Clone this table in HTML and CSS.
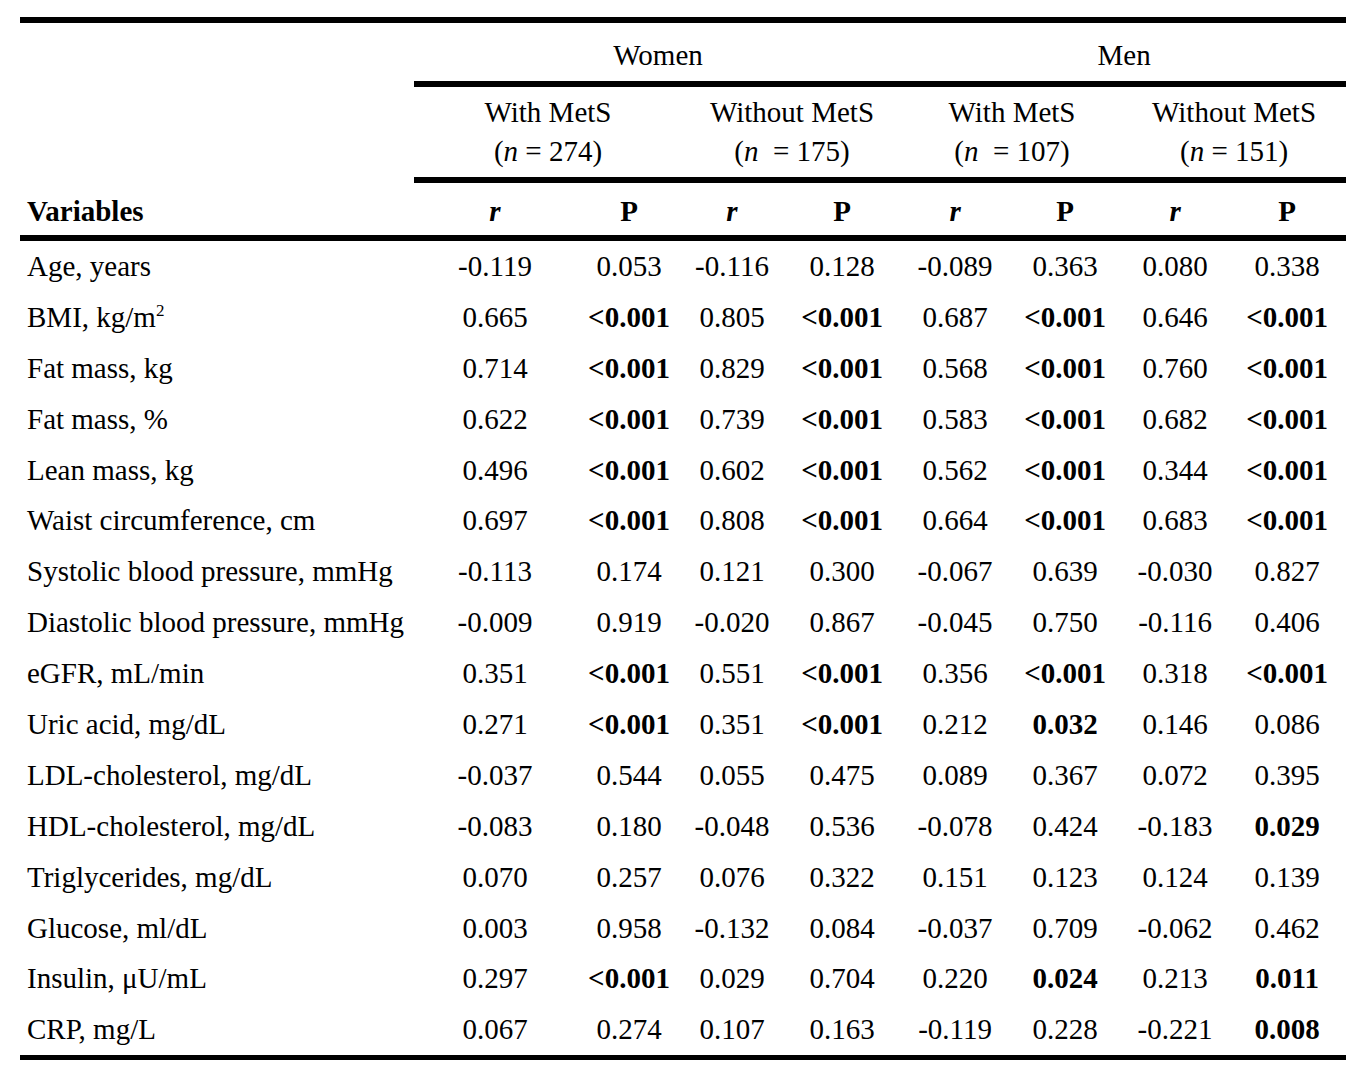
FILE: index.html
```html
<!DOCTYPE html>
<html lang="en">
<head>
<meta charset="utf-8">
<title>Correlations by sex and MetS</title>
<link rel="stylesheet" href="styles.css">
</head>
<body>
<table class="stats">
  <colgroup>
    <col class="c-label">
    <col class="c1"><col class="c2"><col class="c3"><col class="c4">
    <col class="c5"><col class="c6"><col class="c7"><col class="c8">
  </colgroup>
  <thead>
    <tr class="h-sex">
      <th class="blank"></th>
      <th class="grp" colspan="4">Women</th>
      <th class="grp" colspan="4">Men</th>
    </tr>
    <tr class="h-mets">
      <th class="blank"></th>
      <th class="grp" colspan="2">With MetS<br>(<i>n</i> = 274)</th>
      <th class="grp" colspan="2">Without MetS<br>(<i>n</i> &nbsp;= 175)</th>
      <th class="grp" colspan="2">With MetS<br>(<i>n</i> &nbsp;= 107)</th>
      <th class="grp" colspan="2">Without MetS<br>(<i>n</i> = 151)</th>
    </tr>
    <tr class="h-vars">
      <th class="label">Variables</th>
      <th><i>r</i></th><th>P</th>
      <th><i>r</i></th><th>P</th>
      <th><i>r</i></th><th>P</th>
      <th><i>r</i></th><th>P</th>
    </tr>
  </thead>
  <tbody>
    <tr><td class="label">Age, years</td><td>-0.119</td><td>0.053</td><td>-0.116</td><td>0.128</td><td>-0.089</td><td>0.363</td><td>0.080</td><td>0.338</td></tr>
    <tr><td class="label">BMI, kg/m<sup>2</sup></td><td>0.665</td><td class="sig">&lt;0.001</td><td>0.805</td><td class="sig">&lt;0.001</td><td>0.687</td><td class="sig">&lt;0.001</td><td>0.646</td><td class="sig">&lt;0.001</td></tr>
    <tr><td class="label">Fat mass, kg</td><td>0.714</td><td class="sig">&lt;0.001</td><td>0.829</td><td class="sig">&lt;0.001</td><td>0.568</td><td class="sig">&lt;0.001</td><td>0.760</td><td class="sig">&lt;0.001</td></tr>
    <tr><td class="label">Fat mass, %</td><td>0.622</td><td class="sig">&lt;0.001</td><td>0.739</td><td class="sig">&lt;0.001</td><td>0.583</td><td class="sig">&lt;0.001</td><td>0.682</td><td class="sig">&lt;0.001</td></tr>
    <tr><td class="label">Lean mass, kg</td><td>0.496</td><td class="sig">&lt;0.001</td><td>0.602</td><td class="sig">&lt;0.001</td><td>0.562</td><td class="sig">&lt;0.001</td><td>0.344</td><td class="sig">&lt;0.001</td></tr>
    <tr><td class="label">Waist circumference, cm</td><td>0.697</td><td class="sig">&lt;0.001</td><td>0.808</td><td class="sig">&lt;0.001</td><td>0.664</td><td class="sig">&lt;0.001</td><td>0.683</td><td class="sig">&lt;0.001</td></tr>
    <tr><td class="label">Systolic blood pressure, mmHg</td><td>-0.113</td><td>0.174</td><td>0.121</td><td>0.300</td><td>-0.067</td><td>0.639</td><td>-0.030</td><td>0.827</td></tr>
    <tr><td class="label">Diastolic blood pressure, mmHg</td><td>-0.009</td><td>0.919</td><td>-0.020</td><td>0.867</td><td>-0.045</td><td>0.750</td><td>-0.116</td><td>0.406</td></tr>
    <tr><td class="label">eGFR, mL/min</td><td>0.351</td><td class="sig">&lt;0.001</td><td>0.551</td><td class="sig">&lt;0.001</td><td>0.356</td><td class="sig">&lt;0.001</td><td>0.318</td><td class="sig">&lt;0.001</td></tr>
    <tr><td class="label">Uric acid, mg/dL</td><td>0.271</td><td class="sig">&lt;0.001</td><td>0.351</td><td class="sig">&lt;0.001</td><td>0.212</td><td class="sig">0.032</td><td>0.146</td><td>0.086</td></tr>
    <tr><td class="label">LDL-cholesterol, mg/dL</td><td>-0.037</td><td>0.544</td><td>0.055</td><td>0.475</td><td>0.089</td><td>0.367</td><td>0.072</td><td>0.395</td></tr>
    <tr><td class="label">HDL-cholesterol, mg/dL</td><td>-0.083</td><td>0.180</td><td>-0.048</td><td>0.536</td><td>-0.078</td><td>0.424</td><td>-0.183</td><td class="sig">0.029</td></tr>
    <tr><td class="label">Triglycerides, mg/dL</td><td>0.070</td><td>0.257</td><td>0.076</td><td>0.322</td><td>0.151</td><td>0.123</td><td>0.124</td><td>0.139</td></tr>
    <tr><td class="label">Glucose, ml/dL</td><td>0.003</td><td>0.958</td><td>-0.132</td><td>0.084</td><td>-0.037</td><td>0.709</td><td>-0.062</td><td>0.462</td></tr>
    <tr><td class="label">Insulin, μU/mL</td><td>0.297</td><td class="sig">&lt;0.001</td><td>0.029</td><td>0.704</td><td>0.220</td><td class="sig">0.024</td><td>0.213</td><td class="sig">0.011</td></tr>
    <tr><td class="label">CRP, mg/L</td><td>0.067</td><td>0.274</td><td>0.107</td><td>0.163</td><td>-0.119</td><td>0.228</td><td>-0.221</td><td class="sig">0.008</td></tr>
  </tbody>
</table>
</body>
</html>
```

FILE: styles.css
```css
html, body {
  margin: 0;
  padding: 0;
  background: #ffffff;
}

body {
  font-family: "Liberation Serif", "Times New Roman", serif;
  font-size: 29px;
  color: #000;
}

.stats {
  margin: 17px 0 0 20px;
  width: 1326px;
  table-layout: fixed;
  border-collapse: separate;
  border-spacing: 0;
  border-top: 6px solid #000;
  border-bottom: 5px solid #000;
}

.c-label { width: 394px; }
.c1 { width: 162px; }
.c2 { width: 106px; }
.c3 { width: 100px; }
.c4 { width: 120px; }
.c5 { width: 106px; }
.c6 { width: 114px; }
.c7 { width: 106px; }
.c8 { width: 118px; }

.stats th,
.stats td {
  padding: 0;
  line-height: 30px;
  text-align: center;
  vertical-align: top;
  white-space: nowrap;
}

.stats th {
  font-weight: normal;
}

.stats .label {
  text-align: left;
  padding-left: 7px;
}

.h-sex .grp {
  padding: 17px 0 11px;
  border-bottom: 6px solid #000;
}

.h-mets .grp {
  padding: 6px 0 6px;
  line-height: 39px;
  border-bottom: 6px solid #000;
}

.h-vars th {
  padding: 13px 0 9px;
  font-weight: bold;
  border-bottom: 6px solid #000;
}

.h-vars th.label {
  padding-left: 7px;
}

.stats tbody td {
  padding-top: 10px;
  padding-bottom: 10.9px;
}

.stats tbody td.label {
  padding-left: 7px;
}

.sig {
  font-weight: bold;
}

sup {
  font-size: 17px;
  line-height: 0;
  vertical-align: 11px;
}
```
